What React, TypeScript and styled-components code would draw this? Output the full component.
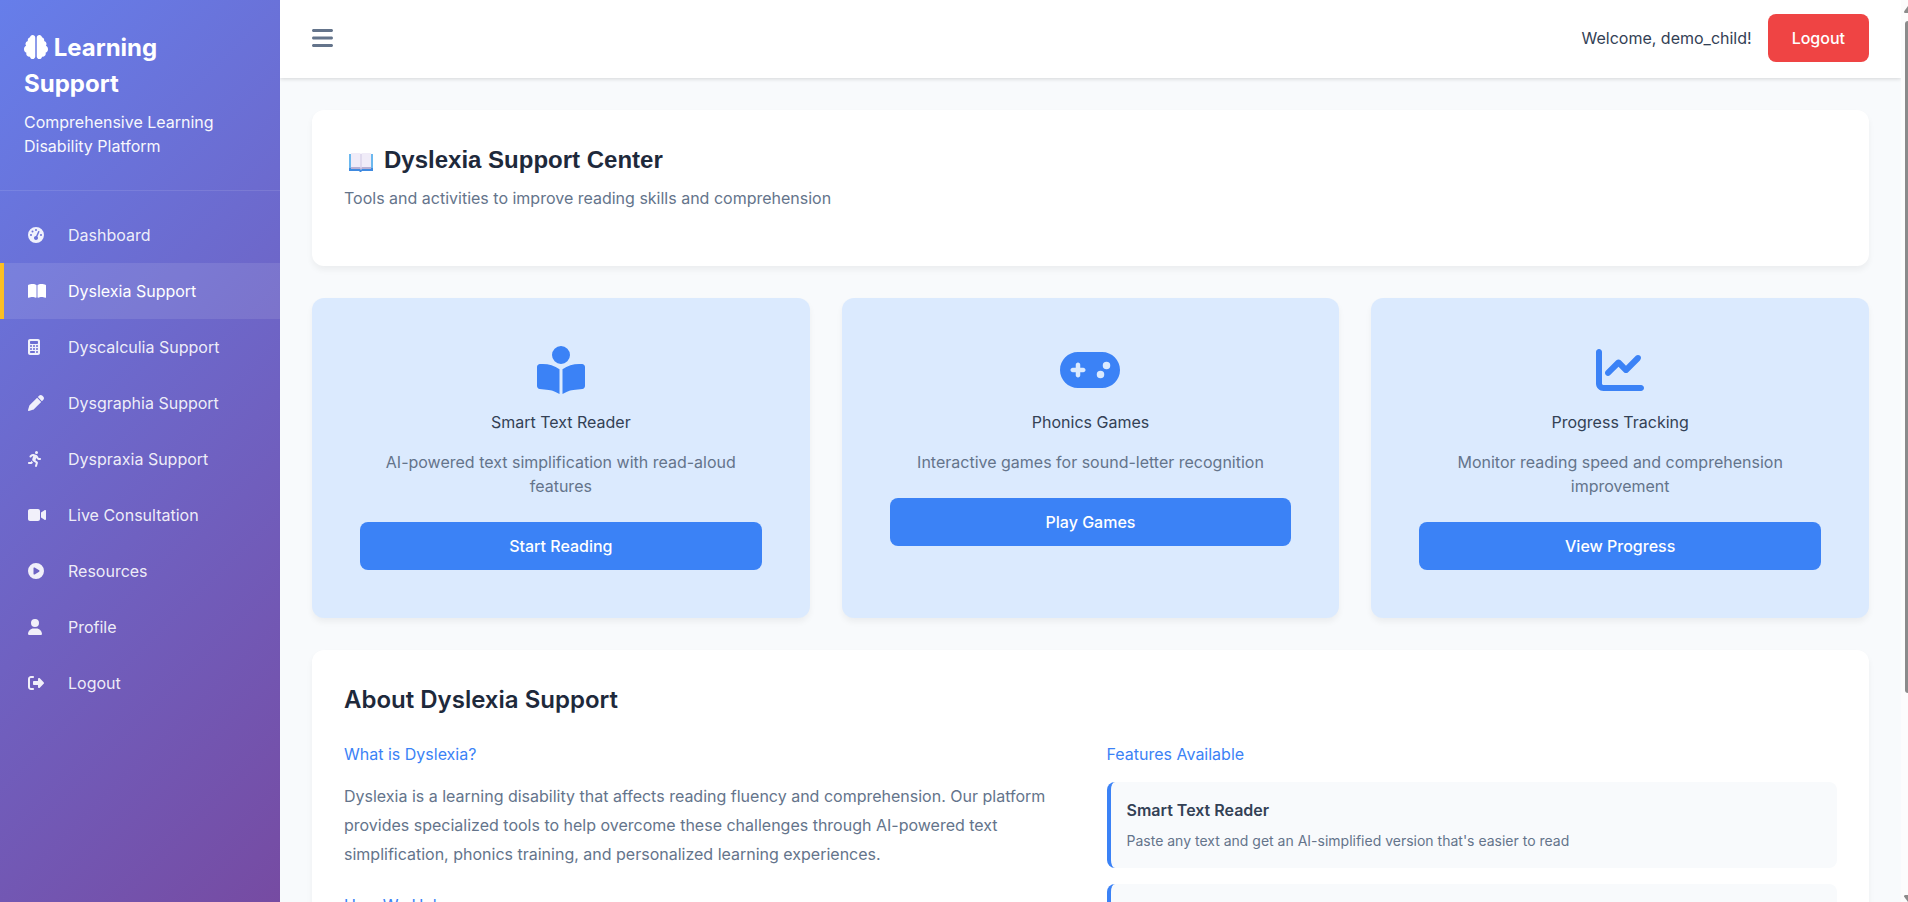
import React from "react";
import styled, { createGlobalStyle } from "styled-components";
import {
  FaBars,
  FaBookOpen,
  FaBookOpenReader,
  FaBrain,
  FaCalculator,
  FaChartLine,
  FaCirclePlay,
  FaGamepad,
  FaGaugeHigh,
  FaPen,
  FaPersonRunning,
  FaRightFromBracket,
  FaUser,
  FaVideo,
} from "react-icons/fa6";
import type { IconType } from "react-icons";

const GlobalStyle = createGlobalStyle`
  *, *::before, *::after { box-sizing: border-box; }
  body {
    margin: 0;
    background: #f8fafc;
    color: #334155;
    font-family: Inter, "Liberation Sans", sans-serif;
    font-size: 16px;
    line-height: 24px;
  }
  h1, h2, h3, h4, p, ul { margin: 0; padding: 0; }
  button { font: inherit; cursor: pointer; }
`;

const Shell = styled.div`
  display: grid;
  grid-template-columns: 280px minmax(0, 1fr) 7px;
  height: 100vh;
`;

const Sidebar = styled.aside`
  background: linear-gradient(135deg, #667eea 0%, #764ba2 100%);
  color: #fff;
  overflow: hidden;
`;

const Brand = styled.div`
  padding: 30px 24px 32px;
  border-bottom: 1px solid rgba(255, 255, 255, 0.1);
`;

const BrandTitle = styled.h2`
  margin-bottom: 8px;
  font-size: 24px;
  line-height: 36px;
  font-weight: 700;

  svg {
    vertical-align: -3px;
  }
`;

const BrandTagline = styled.p`
  opacity: 0.95;
`;

const NavList = styled.ul`
  list-style: none;
  padding: 16px 0;
`;

const NavLink = styled.a<{ $active?: boolean }>`
  display: flex;
  align-items: center;
  gap: 16px;
  padding: 16px 24px;
  border-left: 4px solid ${(p) => (p.$active ? "#fbbf24" : "transparent")};
  background: ${(p) => (p.$active ? "rgba(255, 255, 255, 0.1)" : "transparent")};
  color: ${(p) => (p.$active ? "#fff" : "rgba(255, 255, 255, 0.9)")};
  text-decoration: none;
`;

const NavIcon = styled.span`
  display: flex;
  width: 24px;
`;

const Main = styled.div`
  overflow-y: auto;
  scrollbar-width: none;
`;

const TopBar = styled.header`
  display: flex;
  align-items: center;
  justify-content: space-between;
  padding: 14px 32px 16px;
  background: #fff;
  box-shadow: 0 1px 4px rgba(0, 0, 0, 0.15);
`;

const MenuButton = styled.button`
  display: flex;
  padding: 0;
  border: 0;
  background: none;
  color: #64748b;
`;

const Account = styled.div`
  display: flex;
  align-items: center;
  gap: 16px;
`;

const Button = styled.button<{ $danger?: boolean; $block?: boolean }>`
  display: block;
  width: ${(p) => (p.$block ? "100%" : "auto")};
  padding: 12px 24px;
  border: 0;
  border-radius: 8px;
  background: ${(p) => (p.$danger ? "#ef4444" : "#3b82f6")};
  color: #fff;
  font-weight: 500;
`;

const Content = styled.main`
  display: grid;
  gap: 32px;
  padding: 32px;
`;

const Panel = styled.section`
  padding: 32px;
  border-radius: 12px;
  background: #fff;
  box-shadow: 0 4px 6px rgba(0, 0, 0, 0.05);
`;

const PageTitle = styled.h1`
  display: flex;
  align-items: center;
  gap: 8px;
  margin-bottom: 8px;
  color: #1e293b;
  font-family: "Liberation Sans", Arial, sans-serif;
  font-size: 24px;
  line-height: 36px;
  font-weight: 700;
`;

const PageSubtitle = styled.p`
  margin-bottom: 24px;
  color: #64748b;
`;

const ToolGrid = styled.div`
  display: grid;
  grid-template-columns: repeat(3, minmax(0, 1fr));
  gap: 32px;
`;

const ToolCard = styled.article`
  padding: 48px;
  border-radius: 12px;
  background: #dbeafe;
  box-shadow: 0 4px 6px rgba(0, 0, 0, 0.05);
  text-align: center;
`;

const ToolIcon = styled.div`
  display: flex;
  justify-content: center;
  margin-bottom: 16px;
  color: #3b82f6;
`;

const ToolTitle = styled.h3`
  margin-bottom: 16px;
  font-size: 16px;
  font-weight: 400;
`;

const ToolText = styled.p`
  margin-bottom: 24px;
  color: #64748b;
`;

const SectionTitle = styled.h2`
  margin-bottom: 24px;
  color: #1e293b;
  font-size: 24px;
  line-height: 36px;
  font-weight: 600;
`;

const Columns = styled.div`
  display: grid;
  grid-template-columns: repeat(2, minmax(0, 1fr));
  gap: 32px;
`;

const TopicTitle = styled.h3`
  margin-bottom: 16px;
  color: #3b82f6;
  font-size: 16px;
  font-weight: 400;
`;

const Paragraph = styled.p`
  margin-bottom: 24px;
  color: #64748b;
  line-height: 29px;
`;

const Feature = styled.div`
  margin-bottom: 16px;
  padding: 16px;
  border-left: 4px solid #3b82f6;
  border-radius: 8px;
  background: #f8fafc;
`;

const FeatureTitle = styled.h4`
  margin-bottom: 8px;
  font-size: 16px;
  font-weight: 600;
`;

const FeatureText = styled.p`
  color: #64748b;
  font-size: 14px;
  line-height: 22px;
`;

const ScrollTrack = styled.div`
  display: flex;
  flex-direction: column;
  align-items: flex-end;
  justify-content: space-between;
  padding: 6px 0 0;
  background: #fcfcfc;
  overflow: hidden;
`;

const ScrollThumb = styled.div`
  flex: 0 1 672px;
  width: 3px;
  margin: 8px 0 auto;
  border-radius: 3px 0 0 3px;
  background: #8b8b8b;
`;

/* A FontAwesome glyph: `width` follows from the glyph's own aspect ratio. */
type GlyphSpec = { icon: IconType; width: number };

const GlyphFrame = styled.span<{ $width: number; $height: number }>`
  svg {
    display: inline-block;
    width: ${(p) => p.$width}px;
    height: ${(p) => p.$height}px;
  }
`;

const BlockGlyphFrame = styled(GlyphFrame)`
  display: flex;
`;

const Glyph = ({
  icon: Icon,
  width,
  height,
  inline,
}: GlyphSpec & { height: number; inline?: boolean }) => {
  const Frame = inline ? GlyphFrame : BlockGlyphFrame;
  return (
    <Frame $width={width} $height={height}>
      <Icon aria-hidden />
    </Frame>
  );
};

const navItems: (GlyphSpec & { label: string; active?: boolean })[] = [
  { label: "Dashboard", icon: FaGaugeHigh, width: 16 },
  { label: "Dyslexia Support", icon: FaBookOpen, width: 18, active: true },
  { label: "Dyscalculia Support", icon: FaCalculator, width: 12 },
  { label: "Dysgraphia Support", icon: FaPen, width: 16 },
  { label: "Dyspraxia Support", icon: FaPersonRunning, width: 14 },
  { label: "Live Consultation", icon: FaVideo, width: 18 },
  { label: "Resources", icon: FaCirclePlay, width: 16 },
  { label: "Profile", icon: FaUser, width: 14 },
  { label: "Logout", icon: FaRightFromBracket, width: 16 },
];

const tools: (GlyphSpec & { title: string; text: string; action: string })[] = [
  {
    title: "Smart Text Reader",
    text: "AI-powered text simplification with read-aloud features",
    action: "Start Reading",
    icon: FaBookOpenReader,
    width: 48,
  },
  {
    title: "Phonics Games",
    text: "Interactive games for sound-letter recognition",
    action: "Play Games",
    icon: FaGamepad,
    width: 60,
  },
  {
    title: "Progress Tracking",
    text: "Monitor reading speed and comprehension improvement",
    action: "View Progress",
    icon: FaChartLine,
    width: 48,
  },
];

const OpenBook = () => (
  <svg width="32" height="24" viewBox="0 0 32 24" aria-hidden>
    <path d="M5 6h24v17H5z" fill="#6bb8ee" />
    <path d="M5 20h24v3H18l-1 1h-1l-1-1H5z" fill="#3f8ae0" />
    <path d="M7 5h9l1 1v15l-1-1H7z" fill="#f0ecf8" />
    <path d="M18 5h9v15h-9l-1 1V6z" fill="#f0ecf8" />
    <path d="M7 19h9l1 1 1-1h9v2H7z" fill="#b9b0d4" />
    <path d="M16.500 6h1v16h-1z" fill="#d0c8e4" />
  </svg>
);

export default function App() {
  return (
    <>
      <GlobalStyle />
      <Shell>
        <Sidebar>
          <Brand>
            <BrandTitle>
              <Glyph icon={FaBrain} width={24} height={24} inline /> Learning Support
            </BrandTitle>
            <BrandTagline>Comprehensive Learning Disability Platform</BrandTagline>
          </Brand>
          <nav>
            <NavList>
              {navItems.map((item) => (
                <li key={item.label}>
                  <NavLink href="#" $active={item.active}>
                    <NavIcon>
                      <Glyph icon={item.icon} width={item.width} height={16} />
                    </NavIcon>
                    {item.label}
                  </NavLink>
                </li>
              ))}
            </NavList>
          </nav>
        </Sidebar>

        <Main>
          <TopBar>
            <MenuButton aria-label="Toggle menu">
              <Glyph icon={FaBars} width={21} height={24} />
            </MenuButton>
            <Account>
              <span>Welcome, demo_child!</span>
              <Button $danger>Logout</Button>
            </Account>
          </TopBar>

          <Content>
            <Panel>
              <PageTitle>
                <OpenBook />
                Dyslexia Support Center
              </PageTitle>
              <PageSubtitle>
                Tools and activities to improve reading skills and comprehension
              </PageSubtitle>
            </Panel>

            <ToolGrid>
              {tools.map((tool) => (
                <ToolCard key={tool.title}>
                  <ToolIcon>
                    <Glyph icon={tool.icon} width={tool.width} height={48} />
                  </ToolIcon>
                  <ToolTitle>{tool.title}</ToolTitle>
                  <ToolText>{tool.text}</ToolText>
                  <Button $block>{tool.action}</Button>
                </ToolCard>
              ))}
            </ToolGrid>

            <Panel>
              <SectionTitle>About Dyslexia Support</SectionTitle>
              <Columns>
                <div>
                  <TopicTitle>What is Dyslexia?</TopicTitle>
                  <Paragraph>
                    Dyslexia is a learning disability that affects reading fluency and
                    comprehension. Our platform provides specialized tools to help overcome
                    these challenges through AI-powered text simplification, phonics
                    training, and personalized learning experiences.
                  </Paragraph>
                  <TopicTitle>How We Help</TopicTitle>
                </div>
                <div>
                  <TopicTitle>Features Available</TopicTitle>
                  <Feature>
                    <FeatureTitle>Smart Text Reader</FeatureTitle>
                    <FeatureText>
                      Paste any text and get an AI-simplified version that's easier to read
                    </FeatureText>
                  </Feature>
                  <Feature>
                    <FeatureTitle>Phonics Games</FeatureTitle>
                    <FeatureText>Interactive games for sound-letter recognition</FeatureText>
                  </Feature>
                </div>
              </Columns>
            </Panel>
          </Content>
        </Main>

        <ScrollTrack aria-hidden>
          <svg width="4" height="7" viewBox="0 0 4 7">
            <path d="M4 0v7H1Q0 7 0 5.500Z" fill="#8b8b8b" />
          </svg>
          <ScrollThumb />
          <svg width="4" height="7" viewBox="0 0 4 7">
            <path d="M4 7V0H1Q0 0 0 1.500Z" fill="#8b8b8b" />
          </svg>
        </ScrollTrack>
      </Shell>
    </>
  );
}
